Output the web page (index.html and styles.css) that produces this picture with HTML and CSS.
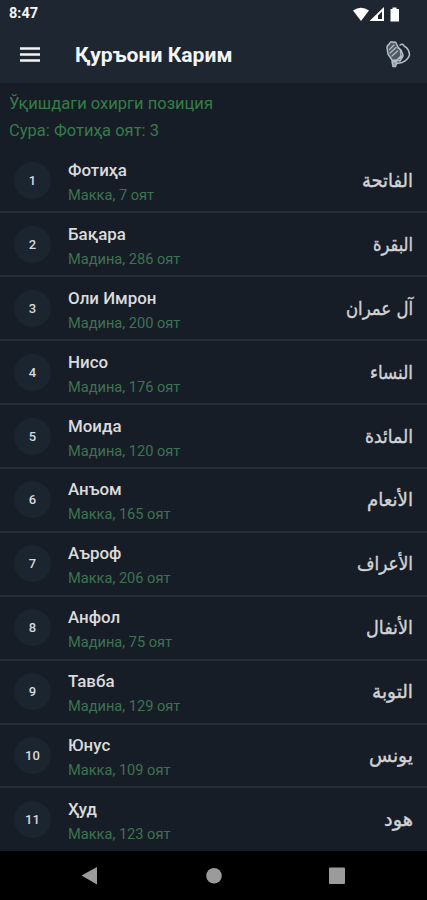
FILE: index.html
```html
<!DOCTYPE html>
<html lang="uz-Cyrl">
<head>
<meta charset="utf-8">
<meta name="viewport" content="width=device-width, initial-scale=1">
<title>Қуръони Карим</title>
<link rel="stylesheet" href="styles.css">
</head>
<body>
<div class="status">
  <span class="clock">8:47</span>
  <svg class="indicators" width="48" height="16" viewBox="0 0 48 16">
    <path fill="#fff" d="M0 4.500Q8 -.8 16 4.500L8 15Z"/>
    <path fill="#fff" fill-rule="evenodd" d="M16.500 15L31 1V15ZM25 13H29V5.500L25 9.500Z"/>
    <path fill="#fff" d="M39.500 3V1.500H43.500V3H46V15.500H37.500V3Z"/>
  </svg>
</div>
<header class="appbar">
  <svg class="menu" width="20" height="16" viewBox="0 0 20 16"><path stroke="#f3f4f5" stroke-width="2.400" d="M0 1.500H20M0 7.500H20M0 13.500H20"/></svg>
  <h1 class="title">Қуръони Карим</h1>
  <svg class="hand" width="26" height="30" viewBox="0 0 26 30" fill="none" stroke="#b4bdc5" stroke-width="1.500" stroke-linecap="round" stroke-linejoin="round">
    <path fill="#4d5964" d="M7 20L3 14L2 8Q2 5 4 4.500L5 2.500Q7 1 8.500 2.500Q11 1 11.500 4L13 7L15.500 10L16 16L11 21Z"/>
    <path stroke-width="1.200" d="M4.500 9.500L9 5M5 13L11 7.500M7 16L12.500 11"/>
    <path d="M15 5Q18 3 19 6Q24.500 9 24.500 15Q23 20 17 22.500L12 23.500M13 8L16 10L18 15L14 19M18 16L15 21L10 20"/>
    <path d="M7 21L12 22L10.500 26.500H8Z" fill="#8f9aa4"/>
  </svg>
</header>
<main class="list">
  <div class="last">
    <div>Ўқишдаги охирги позиция</div>
    <div>Сура: Фотиҳа оят: 3</div>
  </div>
  <div class="row"><span class="num">1</span><div class="info"><div class="name">Фотиҳа</div><div class="meta">Макка, 7 оят</div></div><svg class="arabic" width="51" height="32"><text x="51" y="22" textLength="51" lengthAdjust="spacingAndGlyphs">الفاتحة</text></svg></div>
  <div class="row"><span class="num">2</span><div class="info"><div class="name">Бақара</div><div class="meta">Мадина, 286 оят</div></div><svg class="arabic" width="40" height="32"><text x="40" y="22" textLength="40" lengthAdjust="spacingAndGlyphs">البقرة</text></svg></div>
  <div class="row"><span class="num">3</span><div class="info"><div class="name">Оли Имрон</div><div class="meta">Мадина, 200 оят</div></div><svg class="arabic" width="67" height="32"><text x="67" y="22" textLength="67" lengthAdjust="spacingAndGlyphs">آل عمران</text></svg></div>
  <div class="row"><span class="num">4</span><div class="info"><div class="name">Нисо</div><div class="meta">Мадина, 176 оят</div></div><svg class="arabic" width="43" height="32"><text x="43" y="22" textLength="43" lengthAdjust="spacingAndGlyphs">النساء</text></svg></div>
  <div class="row"><span class="num">5</span><div class="info"><div class="name">Моида</div><div class="meta">Мадина, 120 оят</div></div><svg class="arabic" width="48" height="32"><text x="48" y="22" textLength="48" lengthAdjust="spacingAndGlyphs">المائدة</text></svg></div>
  <div class="row"><span class="num">6</span><div class="info"><div class="name">Анъом</div><div class="meta">Макка, 165 оят</div></div><svg class="arabic" width="46" height="32"><text x="46" y="22" textLength="46" lengthAdjust="spacingAndGlyphs">الأنعام</text></svg></div>
  <div class="row"><span class="num">7</span><div class="info"><div class="name">Аъроф</div><div class="meta">Макка, 206 оят</div></div><svg class="arabic" width="56" height="32"><text x="56" y="22" textLength="56" lengthAdjust="spacingAndGlyphs">الأعراف</text></svg></div>
  <div class="row"><span class="num">8</span><div class="info"><div class="name">Анфол</div><div class="meta">Мадина, 75 оят</div></div><svg class="arabic" width="47" height="32"><text x="47" y="22" textLength="47" lengthAdjust="spacingAndGlyphs">الأنفال</text></svg></div>
  <div class="row"><span class="num">9</span><div class="info"><div class="name">Тавба</div><div class="meta">Мадина, 129 оят</div></div><svg class="arabic" width="41" height="32"><text x="41" y="22" textLength="41" lengthAdjust="spacingAndGlyphs">التوبة</text></svg></div>
  <div class="row"><span class="num">10</span><div class="info"><div class="name">Юнус</div><div class="meta">Макка, 109 оят</div></div><svg class="arabic" width="44" height="32"><text x="44" y="22" textLength="44" lengthAdjust="spacingAndGlyphs">يونس</text></svg></div>
  <div class="row"><span class="num">11</span><div class="info"><div class="name">Ҳуд</div><div class="meta">Макка, 123 оят</div></div><svg class="arabic" width="29" height="32"><text x="29" y="22" textLength="29" lengthAdjust="spacingAndGlyphs">هود</text></svg></div>
</main>
<nav class="navbar">
  <svg width="427" height="49" viewBox="0 0 427 49" fill="#9b9b9b"><path d="M81.500 24.500L97 16V33.500Z"/><circle cx="214" cy="24.700" r="7.800"/><rect x="329" y="16.500" width="16" height="16.500" rx="1"/></svg>
</nav>
</body>
</html>
```

FILE: styles.css
```css
* { box-sizing: border-box; }
body {
  margin: 0;
  height: 900px;
  display: flex;
  flex-direction: column;
  overflow: hidden;
  background: #171d27;
  font-family: Roboto, "DejaVu Sans", sans-serif;
}
.status {
  height: 27px;
  flex: none;
  display: flex;
  justify-content: space-between;
  align-items: center;
  padding: 0 22px 0 9px;
  background: #1e2731;
}
.clock { font-size: 14.500px; font-weight: 700; line-height: 16px; color: #f4f4f4; }
.indicators { margin-right: 4px; }
.appbar {
  height: 56px;
  flex: none;
  display: flex;
  align-items: center;
  padding: 0 16px 0 20px;
  background: #1e2731;
}
.title {
  margin: 0 auto 0 35px;
  font-size: 21.100px;
  font-weight: 700;
  line-height: 28px;
  color: #f3f4f5;
  white-space: nowrap;
}
.list { flex: 1; overflow: hidden; }
.last {
  height: 66.500px;
  padding: 8px 9px 0;
  font-size: 16.550px;
  line-height: 26.500px;
  color: #357c47;
}
.row {
  height: 63.900px;
  display: flex;
  align-items: center;
  padding: 0 14px 0 14px;
  border-bottom: 2px solid #252e38;
}
.row:last-child { border-bottom-color: transparent; }
.num {
  width: 37px;
  height: 37px;
  border-radius: 50%;
  display: flex;
  align-items: center;
  justify-content: center;
  background: #1b252f;
  color: #d7d9db;
  font-size: 13px;
  font-weight: 500;
}
.info { flex: 1; margin: 5px 0 0 17px; }
.name { font-size: 16.900px; font-weight: 500; line-height: 25px; color: #dadbdd; }
.meta { font-size: 14.600px; line-height: 25px; color: #3d7350; }
.arabic {
  flex: none;
  margin-top: 1px;
  overflow: visible;
  direction: rtl;
  font-family: "DejaVu Sans", sans-serif;
  font-size: 19px;
  fill: #d0d2d4;
  stroke: #d0d2d4;
  stroke-width: .4px;
}
.navbar { height: 49px; flex: none; background: #000; }
.navbar svg { display: block; }
```
